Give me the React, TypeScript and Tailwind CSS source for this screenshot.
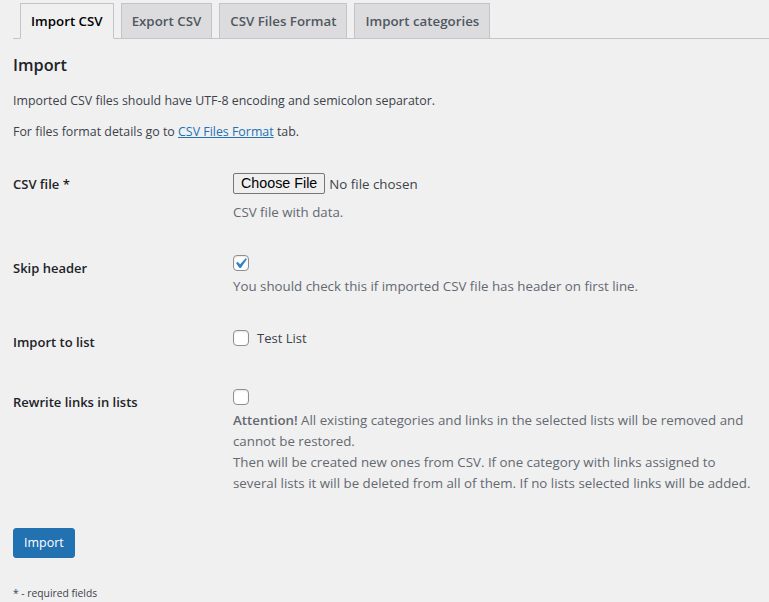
import React from "react";

const Check = () => (
  <svg viewBox="0 0 20 20" className="absolute left-[-4px] top-[-3px] h-[21px] w-[21px]">
    <path d="M14.83 4.89l1.34.94-5.81 8.38H9.02L5.78 9.67l1.34-1.25 2.57 2.4z" fill="#3582c4" />
  </svg>
);

const Box = ({ checked }: { checked?: boolean }) => (
  <span className="relative block h-4 w-4 shrink-0 rounded-[4px] border border-[#8c8f94] bg-white shadow-[inset_0_1px_2px_rgba(0,0,0,0.1)]">
    {checked && <Check />}
  </span>
);

export default function App() {
  const tabs = ["Import CSV", "Export CSV", "CSV Files Format", "Import categories"];
  return (
    <div
      className="min-h-screen bg-[#f0f0f1] pl-[13px] pt-[3px] text-[12.4px] text-[#3c434a]"
      style={{ fontFamily: '"Open Sans", "Noto Sans", sans-serif' }}
    >
      <nav className="flex items-end border-b border-[#c3c4c7]">
        {tabs.map((t, i) =>
          i === 0 ? (
            <div
              key={t}
              className="-mb-px ml-[7px] border border-[#c3c4c7] border-b-[#f0f0f1] bg-[#f0f0f1] px-[10px] py-[5px] text-[13.3px] font-semibold leading-[24px] text-black"
            >
              {t}
            </div>
          ) : (
            <div
              key={t}
              className="ml-[7px] border-x border-t border-[#c3c4c7] bg-[#dcdcde] px-[10px] py-[5px] text-[13.3px] font-semibold leading-[24px] text-[#50575e]"
            >
              {t}
            </div>
          )
        )}
      </nav>

      <h2 className="mt-[14px] text-[16.3px] font-semibold leading-[24px] text-[#1d2327]">Import</h2>
      <p className="mt-[14px] leading-[20px]">
        Imported CSV files should have UTF-8 encoding and semicolon separator.
      </p>
      <p className="mt-[11px] leading-[20px]">
        For files format details go to{" "}
        <a className="text-[#2271b1] underline" href="#">
          CSV Files Format
        </a>{" "}
        tab.
      </p>

      {/* Row 1 */}
      <div className="mt-[31px] flex items-start">
        <div className="mt-[2px] w-[220px] shrink-0 text-[13px] font-semibold leading-[18px] text-[#1d2327]">
          CSV file *
        </div>
        <div>
          <div className="flex items-center">
            <span
              className="flex h-[21px] items-center rounded-[2px] border border-[#767676] bg-[#efefef] px-[7px] text-[14.3px] text-black"
              style={{ fontFamily: '"Liberation Sans", Arial, sans-serif' }}
            >
              Choose File
            </span>
            <span className="ml-[4px] text-[13.33px] leading-[20px]">No file chosen</span>
          </div>
          <p className="mt-[8px] text-[13.3px] leading-[20px] text-[#646970]">CSV file with data.</p>
        </div>
      </div>

      {/* Row 2 */}
      <div className="mt-[33px] flex items-start">
        <div className="mt-[4px] w-[220px] shrink-0 text-[13px] font-semibold leading-[18px] text-[#1d2327]">
          Skip header
        </div>
        <div>
          <Box checked />
          <p className="mt-[5px] text-[13.3px] leading-[20px] text-[#646970]">
            You should check this if imported CSV file has header on first line.
          </p>
        </div>
      </div>

      {/* Row 3 */}
      <div className="mt-[34px] flex items-start">
        <div className="mt-[3px] w-[220px] shrink-0 text-[13px] font-semibold leading-[18px] text-[#1d2327]">
          Import to list
        </div>
        <div className="flex items-center">
          <Box />
          <span className="ml-[8px] text-[13px] leading-[16px]">Test List</span>
        </div>
      </div>

      {/* Row 4 */}
      <div className="mt-[38px] flex items-start">
        <div className="mt-[4px] w-[220px] shrink-0 text-[13px] font-semibold leading-[18px] text-[#1d2327]">
          Rewrite links in lists
        </div>
        <div className="pr-[10px]">
          <Box />
          <p className="mt-[5px] text-[13.3px] leading-[21px] text-[#646970]">
            <b className="font-semibold">Attention!</b> All existing categories and links in the selected lists will be
            removed and cannot be restored.
            <br />
            Then will be created new ones from CSV. If one category with links assigned to several lists it will be
            deleted from all of them. If no lists selected links will be added.
          </p>
        </div>
      </div>

      <button className="mt-[34px] block h-[30px] rounded-[3px] border border-[#2271b1] bg-[#2271b1] px-[10px] text-[12.5px] leading-[28px] text-white">
        Import
      </button>

      <p className="mt-[28px] text-[10.3px] leading-[14px]">* - required fields</p>
    </div>
  );
}
